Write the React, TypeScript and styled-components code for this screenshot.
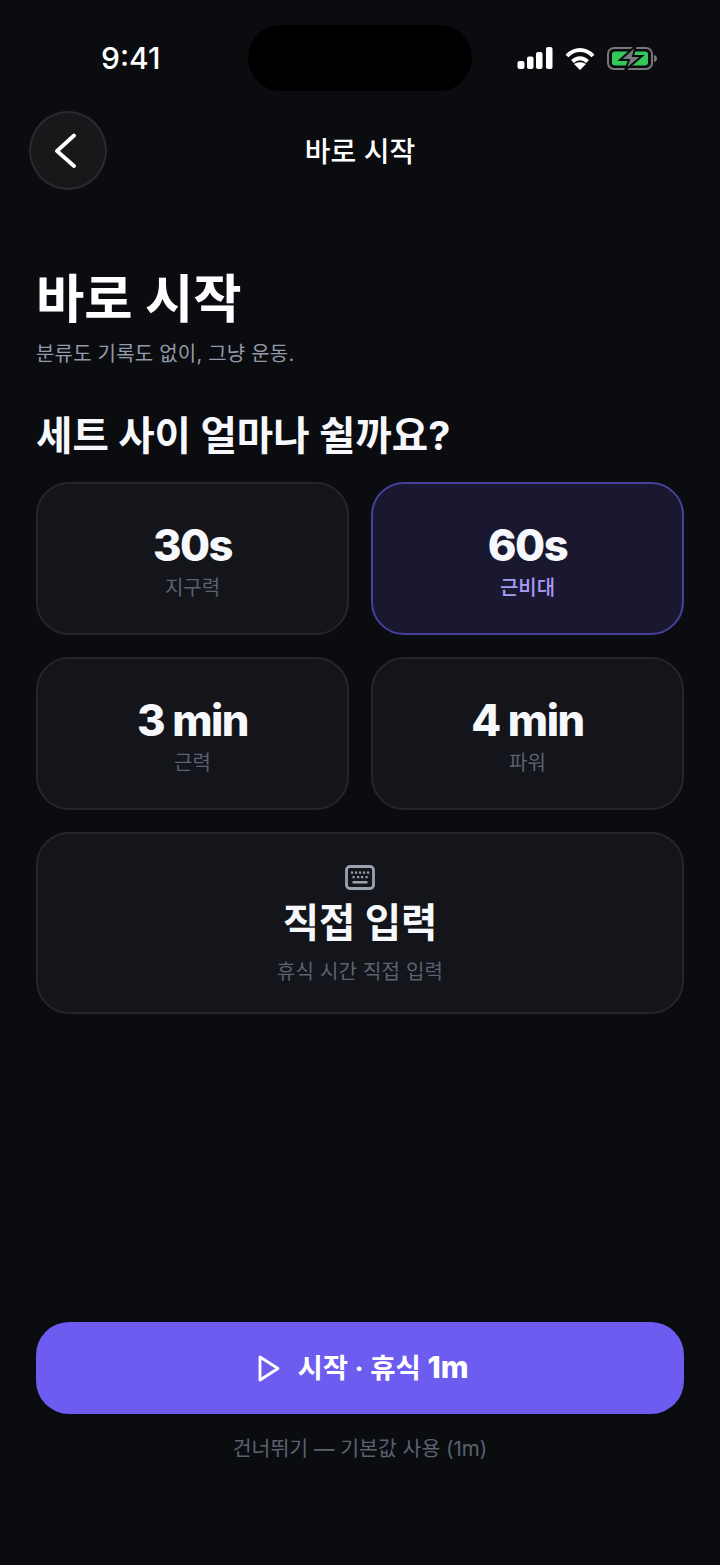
import React from 'react'
import styled, { createGlobalStyle } from 'styled-components'

const FONT = `Inter, "Noto Sans CJK KR", sans-serif`

const Global = createGlobalStyle`
  html, body { margin: 0; padding: 0; background: #0a0c10; }
  * { box-sizing: border-box; }
`

const options = [
  { time: '30s', label: '지구력' },
  { time: '60s', label: '근비대', active: true },
  { time: '3 min', label: '근력' },
  { time: '4 min', label: '파워' },
]

const App = () => (
  <Screen>
    <Global />
    <StatusBar>
      <Clock>9:41</Clock>
      <Island />
      <StatusIcons>
        <svg width="36" height="22" viewBox="0 0 36 22" fill="#fff">
          <rect x="0.500" y="14" width="7" height="8" rx="2" />
          <rect x="10" y="9.500" width="6.500" height="12.500" rx="2" />
          <rect x="19" y="5" width="6.500" height="17" rx="2" />
          <rect x="29" y="0" width="6.500" height="22" rx="2" />
        </svg>
        <svg width="30" height="23" viewBox="0 0 30 23" fill="none" stroke="#fff" strokeWidth="4">
          <path d="M2 9C9.500 1 20.500 1 28 9" />
          <path d="M7.500 14.500C12 10 18 10 22.500 14.500" />
          <path d="M15 23l-6-6C12.500 14.500 17.500 14.500 21 17z" fill="#fff" stroke="none" />
        </svg>
        <svg width="50" height="26" viewBox="0 0 50 26">
          <rect x="1" y="3" width="44" height="21" rx="6" fill="none" stroke="#77797c" strokeWidth="2" />
          <rect x="5" y="6.500" width="36" height="14" rx="3" fill="#34c759" />
          <path d="M47 10c2 .5 3 2 3 3.500s-1 3-3 3.500z" fill="#77797c" />
          <path d="M29 0.500L13 15h9l-4 10.500L35 11h-9z" fill="#77797c" stroke="#0a0c10" strokeWidth="2" />
        </svg>
      </StatusIcons>
    </StatusBar>

    <NavBar>
      <BackButton aria-label="뒤로">
        <svg width="26" height="36" viewBox="0 0 26 36" fill="none" stroke="#fff" strokeWidth="3.800" strokeLinecap="round" strokeLinejoin="round">
          <path d="M22 2.500L5 18l17 15" />
        </svg>
      </BackButton>
      <NavTitle>바로 시작</NavTitle>
    </NavBar>

    <Content>
      <Heading>바로 시작</Heading>
      <Subtitle>분류도 기록도 없이, 그냥 운동.</Subtitle>
      <Question>세트 사이 얼마나 쉴까요?</Question>
      <OptionGrid>
        {options.map((o) => (
          <OptionCard key={o.time} $active={o.active}>
            <OptionTime>{o.time}</OptionTime>
            <OptionLabel $active={o.active}>{o.label}</OptionLabel>
          </OptionCard>
        ))}
        <CustomCard>
          <svg width="30" height="25" viewBox="0 0 30 25" fill="none">
            <rect x="1.500" y="1.500" width="27" height="22" rx="3.500" stroke="#9aa1b0" strokeWidth="2.800" />
            <g fill="#9aa1b0">
              <rect x="6" y="6.500" width="2.200" height="2.200" />
              <rect x="10" y="6.500" width="2.200" height="2.200" />
              <rect x="14" y="6.500" width="2.200" height="2.200" />
              <rect x="18" y="6.500" width="2.200" height="2.200" />
              <rect x="22" y="6.500" width="2.200" height="2.200" />
              <rect x="7.500" y="11" width="2.200" height="2.200" />
              <rect x="12" y="11" width="2.200" height="2.200" />
              <rect x="16" y="11" width="2.200" height="2.200" />
              <rect x="20.500" y="11" width="2.200" height="2.200" />
              <rect x="7.500" y="16" width="15" height="2.500" />
            </g>
          </svg>
          <CustomTitle>직접 입력</CustomTitle>
          <CustomHint>휴식 시간 직접 입력</CustomHint>
        </CustomCard>
      </OptionGrid>
    </Content>

    <Footer>
      <StartButton>
        <svg width="22" height="27" viewBox="0 0 22 27" fill="none" stroke="#fff" strokeWidth="2.800" strokeLinejoin="round">
          <path d="M2 2v23l18-11.500z" />
        </svg>
        <StartLabel>
          시작 · 휴식 <StartValue>1m</StartValue>
        </StartLabel>
      </StartButton>
      <Skip>건너뛰기 — 기본값 사용 (1m)</Skip>
    </Footer>
  </Screen>
)

const Screen = styled('div')`
  width: 720px;
  height: 1565px;
  background: #0a0c10;
  color: #f6f8fc;
  font-family: ${FONT};
  display: flex;
  flex-direction: column;
  overflow: hidden;
`
const StatusBar = styled('div')`
  height: 91px;
  padding: 25px 63px 0 101px;
  display: flex;
  align-items: flex-start;
`
const Clock = styled('div')`
  width: 147px;
  height: 66px;
  line-height: 66px;
  font-size: 30px;
  font-weight: 500;
  color: #fff;
  font-family: Inter, sans-serif;
`
const Island = styled('div')`
  width: 224px;
  height: 66px;
  border-radius: 33px;
  background: #000;
`
const StatusIcons = styled('div')`
  margin-left: auto;
  height: 66px;
  display: flex;
  align-items: center;
  gap: 12px;
`
const NavBar = styled('div')`
  position: relative;
  height: 79px;
  margin-top: 20px;
  padding-left: 29px;
  display: flex;
  align-items: center;
`
const BackButton = styled('button')`
  width: 78px;
  height: 79px;
  border-radius: 50%;
  background: #17181a;
  border: 2px solid #2a2b2e;
  padding: 0 6px 0 0;
  display: flex;
  align-items: center;
  justify-content: center;
`
const NavTitle = styled('div')`
  position: absolute;
  left: 0;
  right: 0;
  margin-top: -2px;
  text-align: center;
  font-size: 28px;
  font-weight: 500;
  color: #fff;
`
const Content = styled('div')`
  flex: 1;
  padding: 0 36px;
  display: flex;
  flex-direction: column;
`
const Heading = styled('h1')`
  margin: 73px 0 0;
  font-size: 52.500px;
  line-height: 72px;
  font-weight: 700;
  color: #fff;
`
const Subtitle = styled('p')`
  margin: 6px 0 0;
  font-size: 20px;
  line-height: 26px;
  letter-spacing: 0.2px;
  color: #949aa8;
`
const Question = styled('h2')`
  margin: 42px 0 0;
  font-size: 39.600px;
  line-height: 54px;
  font-weight: 700;
  color: #f6f8fc;
`
const OptionGrid = styled('div')`
  margin-top: 19px;
  display: grid;
  grid-template-columns: 1fr 1fr;
  gap: 22px;
`
const OptionCard = styled('div')<{ $active?: boolean }>`
  height: 153px;
  border-radius: 33px;
  border: 2px solid ${(p) => (p.$active ? '#4a3f9c' : '#24262c')};
  background: ${(p) => (p.$active ? '#191830' : '#13151a')};
  display: flex;
  flex-direction: column;
  align-items: center;
  padding-top: 35px;
`
const OptionTime = styled('div')`
  font-size: 43.500px;
  line-height: 52px;
  font-weight: 800;
  letter-spacing: -1.500px;
`
const OptionLabel = styled('div')<{ $active?: boolean }>`
  margin-top: 3px;
  font-size: 20px;
  line-height: 28px;
  font-weight: ${(p) => (p.$active ? 500 : 400)};
  color: ${(p) => (p.$active ? '#a99bf5' : '#5b6270')};
`
const CustomCard = styled('div')`
  grid-column: 1 / -1;
  height: 182px;
  border-radius: 33px;
  border: 2px solid #24262c;
  background: #13151a;
  display: flex;
  flex-direction: column;
  align-items: center;
  padding-top: 31px;
`
const CustomTitle = styled('div')`
  font-size: 39.500px;
  line-height: 56px;
  font-weight: 700;
  margin-top: 5px;
`
const CustomHint = styled('div')`
  font-size: 20px;
  line-height: 28px;
  color: #5b6270;
  margin-top: 7px;
  letter-spacing: 0.2px;
`
const Footer = styled('div')`
  padding: 0 36px 102px;
  display: flex;
  flex-direction: column;
  align-items: center;
`
const StartButton = styled('button')`
  width: 100%;
  height: 92px;
  border: none;
  border-radius: 33px;
  background: #6c5cf0;
  color: #fff;
  font-family: ${FONT};
  padding: 0 0 0 6px;
  display: flex;
  align-items: center;
  justify-content: center;
  gap: 18px;
`
const StartLabel = styled('span')`
  font-size: 27.500px;
  font-weight: 700;
  margin-top: -4px;
`
const StartValue = styled('span')`
  font-size: 30px;
  font-weight: 800;
`
const Skip = styled('div')`
  margin-top: 21px;
  font-size: 20.500px;
  line-height: 28px;
  color: #5b6270;
`

export default App
